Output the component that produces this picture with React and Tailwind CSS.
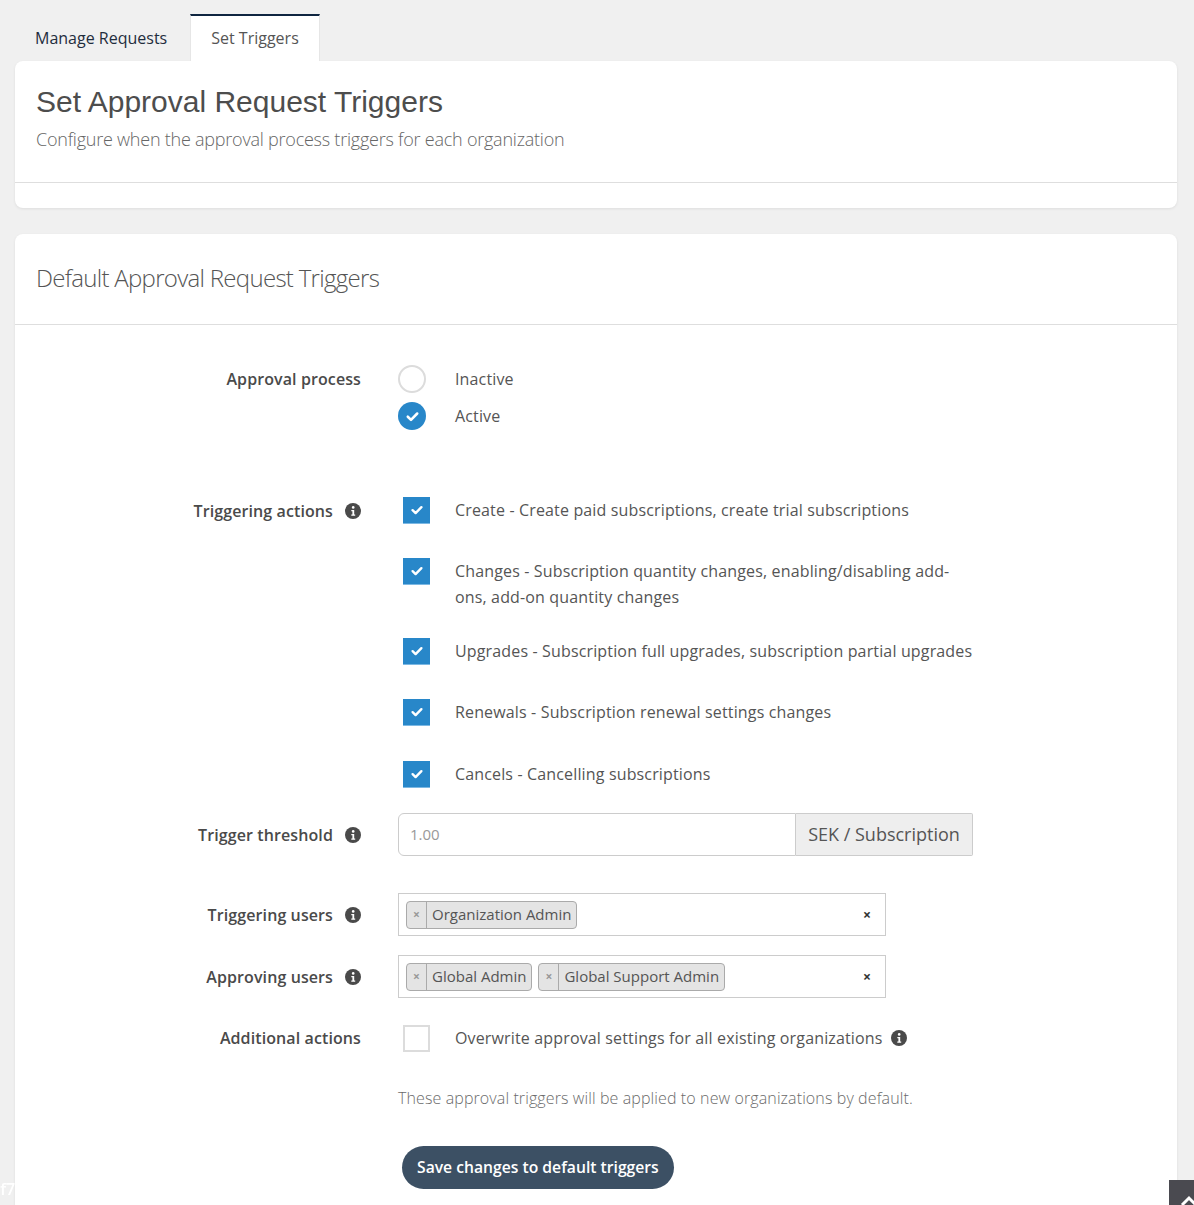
import React from "react";

const Info = ({ className = "" }) => (
  <svg width="16" height="16" viewBox="0 0 16 16" className={className}>
    <circle cx="8" cy="8" r="8" fill="#4a4a4a" />
    <circle cx="8.2" cy="4.4" r="1.3" fill="#fff" />
    <path d="M6.3 6.9h2.9v4.6h1v1.3H6.3v-1.3h1.1V8.2H6.3z" fill="#fff" />
  </svg>
);

const Check = ({ size = 14 }) => (
  <svg width={size} height={size} viewBox="0 0 14 14">
    <path d="M2.6 7.2l3 2.9 5.8-5.9" fill="none" stroke="#fff" strokeWidth="2.4" strokeLinecap="round" strokeLinejoin="round" />
  </svg>
);

const Box = ({ checked }) =>
  checked ? (
    <div className="w-[27px] h-[27px] shrink-0 bg-[#2887c9] border-b border-[#7cb8e3] flex items-center justify-center">
      <Check />
    </div>
  ) : (
    <div className="w-[27px] h-[27px] shrink-0 bg-white border-2 border-[#dcdcdc]" />
  );

const Label = ({ children, info }) => (
  <div className="w-[346px] h-[28px] shrink-0 flex justify-end items-center gap-[12px] text-[16px] font-semibold text-[#4a4a4a] leading-[28px] tracking-[0.1px]">
    <span>{children}</span>
    {info && <Info />}
  </div>
);

const Tag = ({ children }) => (
  <div className="h-[28px] flex items-stretch border border-[#aaa] rounded-[4px] bg-[#e4e4e4] text-[15px] text-[#555]">
    <span className="w-[20px] flex items-center justify-center border-r border-[#aaa] text-[12px] font-bold text-[#999]">×</span>
    <span className="px-[5px] flex items-center">{children}</span>
  </div>
);

const Select = ({ tags }) => (
  <div className="w-[488px] h-[43px] border border-[#ccc] flex items-center pl-[7px] pr-[14px] bg-white">
    <div className="flex gap-[6px] flex-1">
      {tags.map((t) => (
        <Tag key={t}>{t}</Tag>
      ))}
    </div>
    <span className="text-[14px] font-bold text-[#333]">×</span>
  </div>
);

const CheckItem = ({ children, className = "" }) => (
  <div className={"flex items-start " + className}>
    <div className="ml-[5px]">
      <Box checked />
    </div>
    <div className="ml-[25px] w-[518px] text-[16px] leading-[26px] text-[#555] tracking-[0.15px]">{children}</div>
  </div>
);

export default function App() {
  return (
    <div className="min-h-[1205px] bg-[#f0f0f0] px-[15px] pr-[17px] pt-[14px] pb-[40px] text-[#555]" style={{ fontFamily: '"Open Sans", sans-serif' }}>
      {/* Tabs */}
      <div className="flex gap-[3px] h-[47px]">
        <div className="px-[20px] flex items-center text-[16px] text-[#1f2d3d]">Manage Requests</div>
        <div className="px-[20px] pb-[2px] flex items-center text-[16px] text-[#555] bg-white border-t-2 border-[#0f2540] border-x border-x-[#e6e6e6]">Set Triggers</div>
      </div>

      {/* Card 1 */}
      <div className="bg-white rounded-[8px] shadow-[0_1px_3px_rgba(0,0,0,0.08)]">
        <div className="px-[21px] pt-[23px] pb-[30px] border-b border-[#dedede]">
          <h1 className="text-[30px] leading-[36px] text-[#4d4d4d]" style={{ fontFamily: '"Liberation Sans", Arial, sans-serif' }}>
            Set Approval Request Triggers
          </h1>
          <p className="mt-[6px] text-[18px] leading-[26px] font-light text-[#666] tracking-[-0.23px]">Configure when the approval process triggers for each organization</p>
        </div>
        <div className="h-[25px]" />
      </div>

      {/* Card 2 */}
      <div className="mt-[26px] bg-white rounded-[8px] shadow-[0_1px_3px_rgba(0,0,0,0.08)]">
        <div className="px-[21px] pt-[28px] pb-[30px] border-b border-[#dedede]">
          <h2 className="text-[24px] leading-[32px] font-light text-[#555] tracking-[-0.7px]">Default Approval Request Triggers</h2>
        </div>

        <div className="pt-[40px] pb-[60px]">
          {/* Approval process */}
          <div className="flex items-start">
            <Label>Approval process</Label>
            <div className="ml-[37px] flex flex-col gap-[9px]">
              <div className="flex items-center">
                <div className="w-[28px] h-[28px] rounded-full border-2 border-[#dcdcdc] bg-white" />
                <span className="ml-[29px] text-[16px] text-[#555] tracking-[0.15px]">Inactive</span>
              </div>
              <div className="flex items-center">
                <div className="w-[28px] h-[28px] rounded-full bg-[#2887c9] flex items-center justify-center">
                  <Check size={15} />
                </div>
                <span className="ml-[29px] text-[16px] text-[#555] tracking-[0.15px]">Active</span>
              </div>
            </div>
          </div>

          {/* Triggering actions */}
          <div className="flex items-start mt-[67px]">
            <Label info>Triggering actions</Label>
            <div className="ml-[37px] flex flex-col">
              <CheckItem>Create - Create paid subscriptions, create trial subscriptions</CheckItem>
              <CheckItem className="mt-[34px]">Changes - Subscription quantity changes, enabling/disabling add-ons, add-on quantity changes</CheckItem>
              <CheckItem className="mt-[28px]">Upgrades - Subscription full upgrades, subscription partial upgrades</CheckItem>
              <CheckItem className="mt-[34px]">Renewals - Subscription renewal settings changes</CheckItem>
              <CheckItem className="mt-[35px]">Cancels - Cancelling subscriptions</CheckItem>
            </div>
          </div>

          {/* Trigger threshold */}
          <div className="flex items-center mt-[25px]">
            <Label info>Trigger threshold</Label>
            <div className="ml-[37px] flex h-[43px] w-[575px]">
              <div className="flex-1 border border-[#ccc] rounded-l-[6px] flex items-center px-[11px] text-[15px] text-[#999]">1.00</div>
              <div className="w-[177px] border border-l-0 border-[#ccc] bg-[#eeeeee] rounded-r-[2px] flex items-center justify-center text-[18px] text-[#555]">
                SEK / Subscription
              </div>
            </div>
          </div>

          {/* Triggering users */}
          <div className="flex items-center mt-[37px]">
            <Label info>Triggering users</Label>
            <div className="ml-[37px]">
              <Select tags={["Organization Admin"]} />
            </div>
          </div>

          {/* Approving users */}
          <div className="flex items-center mt-[19px]">
            <Label info>Approving users</Label>
            <div className="ml-[37px]">
              <Select tags={["Global Admin", "Global Support Admin"]} />
            </div>
          </div>

          {/* Additional actions */}
          <div className="flex items-center mt-[26px]">
            <Label>Additional actions</Label>
            <div className="ml-[42px] flex items-center">
              <Box checked={false} />
              <span className="ml-[25px] text-[16px] text-[#555] tracking-[0.15px]">Overwrite approval settings for all existing organizations</span>
              <Info className="ml-[8px]" />
            </div>
          </div>

          <div className="ml-[383px] mt-[33px] text-[16px] leading-[26px] font-light text-[#6b6b6b] tracking-[0.11px]">
            These approval triggers will be applied to new organizations by default.
          </div>

          <div className="ml-[387px] mt-[35px]">
            <button className="h-[43px] px-[15px] rounded-full bg-[#3c5064] text-white text-[15.7px] font-semibold">
              Save changes to default triggers
            </button>
          </div>
        </div>
      </div>

      {/* overlays */}
      <div className="fixed left-[-9px] bottom-[4px] text-[16px] text-white font-semibold">5f7</div>
      <div className="fixed right-0 bottom-0 w-[25px] h-[25px] bg-[#4a4a50] overflow-hidden">
        <svg width="25" height="25" viewBox="0 0 25 25" className="absolute left-0 top-0">
          <path d="M13 25l7-7 7 7" fill="none" stroke="#fff" strokeWidth="3" />
        </svg>
      </div>
    </div>
  );
}
